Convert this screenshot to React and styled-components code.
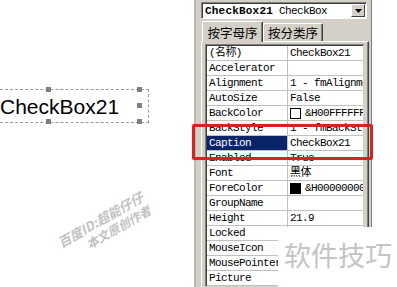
import styled, { createGlobalStyle } from 'styled-components';

const GlobalStyle = createGlobalStyle`
  html, body {
    margin: 0;
    padding: 0;
    background: #ffffff;
    overflow: hidden;
  }
`;

const rows = [
  { name: '(名称)', value: 'CheckBox21' },
  { name: 'Accelerator', value: '' },
  { name: 'Alignment', value: '1 - fmAlignmentRight' },
  { name: 'AutoSize', value: 'False' },
  { name: 'BackColor', value: '&H00FFFFFF&', swatch: '#ffffff' },
  { name: 'BackStyle', value: '1 - fmBackStyleOpaque' },
  { name: 'Caption', value: 'CheckBox21', selected: true },
  { name: 'Enabled', value: 'True' },
  { name: 'Font', value: '黑体' },
  { name: 'ForeColor', value: '&H00000000&', swatch: '#000000' },
  { name: 'GroupName', value: '' },
  { name: 'Height', value: '21.9' },
  { name: 'Locked', value: 'False' },
  { name: 'MouseIcon', value: '(None)' },
  { name: 'MousePointer', value: '0 - fmMousePointerDefault' },
  { name: 'Picture', value: '(None)' },
];

export default function App() {
  return (
    <StyledPage>
      <GlobalStyle />
      <StyledCanvas>
        <StyledControl>
          CheckBox21
          <StyledHandle $x="55px" $y="-3px" />
          <StyledHandle $x="55px" $y="29px" />
          <StyledHandle $x="146px" $y="-3px" />
          <StyledHandle $x="146px" $y="13px" />
          <StyledHandle $x="146px" $y="29px" />
        </StyledControl>
      </StyledCanvas>

      <StyledWindow>
        <StyledCombo>
          <StyledComboText>
            <b>CheckBox21</b> CheckBox
          </StyledComboText>
          <StyledComboButton>
            <svg width="7" height="4" viewBox="0 0 7 4">
              <path d="M0 0h7L3.5 4z" fill="#000" />
            </svg>
          </StyledComboButton>
        </StyledCombo>

        <StyledTabs>
          <StyledTab $active>按字母序</StyledTab>
          <StyledTab>按分类序</StyledTab>
        </StyledTabs>

        <StyledTabPanel>
          <StyledGrid>
            {rows.map((r) => (
              <StyledRow key={r.name}>
                <StyledName $selected={r.selected}>{r.name}</StyledName>
                <StyledValue>
                  {r.swatch && <StyledSwatch $color={r.swatch} />}
                  {r.value}
                </StyledValue>
              </StyledRow>
            ))}
          </StyledGrid>
        </StyledTabPanel>
      </StyledWindow>

      <StyledHighlight />

      <StyledStamp>
        <span>百度ID:超能仔仔</span>
        <span>本文原创作者</span>
      </StyledStamp>

      <StyledCover>软件技巧</StyledCover>
    </StyledPage>
  );
}

const StyledPage = styled.div`
  position: relative;
  width: 397px;
  height: 287px;
  display: flex;
  background: #ffffff;
  overflow: hidden;
`;

const StyledCanvas = styled.div`
  width: 194px;
  flex-shrink: 0;
  padding-top: 89px;
  box-sizing: border-box;
`;

const StyledControl = styled.div`
  position: relative;
  width: 159px;
  height: 34px;
  margin-left: -10px;
  padding-left: 9px;
  box-sizing: border-box;
  border: 1px dashed #9a9a9a;
  font-family: "Liberation Sans", Arial, sans-serif;
  font-size: 21px;
  line-height: 33px;
  color: #000000;
`;

const StyledHandle = styled.div`
  position: absolute;
  left: ${(p) => p.$x};
  top: ${(p) => p.$y};
  width: 5px;
  height: 5px;
  background: #7f7f7f;
`;

const StyledWindow = styled.div`
  width: 178px;
  flex-shrink: 0;
  height: 287px;
  box-sizing: border-box;
  background: #d4d0c8;
  border-left: 2px solid #bcb8b0;
  border-right: 1px solid #808080;
  padding: 2px 4px 0 5px;
  display: flex;
  flex-direction: column;
`;

const StyledCombo = styled.div`
  height: 17px;
  box-sizing: border-box;
  display: flex;
  align-items: center;
  background: #ffffff;
  border-top: 1px solid #808080;
  border-left: 1px solid #808080;
  border-bottom: 1px solid #ffffff;
  border-right: 1px solid #ffffff;
  box-shadow: inset 1px 1px 0 #404040;
  padding: 0 1px 0 3px;
`;

const StyledComboText = styled.div`
  flex: 1;
  font-family: "Liberation Mono", "Courier New", monospace;
  font-size: 11px;
  letter-spacing: -0.6px;
  white-space: nowrap;
  overflow: hidden;
  b {
    letter-spacing: 0.2px;
  }
`;

const StyledComboButton = styled.div`
  width: 14px;
  height: 13px;
  box-sizing: border-box;
  display: flex;
  align-items: center;
  justify-content: center;
  background: #d4d0c8;
  border-top: 1px solid #ffffff;
  border-left: 1px solid #ffffff;
  border-right: 1px solid #404040;
  border-bottom: 1px solid #404040;
`;

const StyledTabs = styled.div`
  display: flex;
  align-items: flex-end;
  height: 20px;
  margin-top: 2px;
  padding-left: 1px;
  position: relative;
  z-index: 1;
`;

const StyledTab = styled.div`
  width: ${(p) => (p.$active ? '61px' : '60px')};
  height: ${(p) => (p.$active ? '21px' : '18px')};
  margin-bottom: ${(p) => (p.$active ? '-1px' : '0')};
  box-sizing: border-box;
  display: flex;
  align-items: center;
  justify-content: center;
  background: #d4d0c8;
  border-top: 1px solid #ffffff;
  border-left: 1px solid #ffffff;
  border-right: 1px solid #404040;
  box-shadow: inset -1px 0 0 #808080;
  border-radius: 2px 2px 0 0;
  font-family: "Noto Sans CJK SC", sans-serif;
  font-size: 12.5px;
  color: #000000;
`;

const StyledTabPanel = styled.div`
  width: 168px;
  flex: 1;
  box-sizing: border-box;
  border-top: 1px solid #ffffff;
  border-left: 1px solid #ffffff;
  border-right: 1px solid #404040;
  box-shadow: inset -1px 0 0 #808080;
  padding: 2px 3px 0 3px;
`;

const StyledGrid = styled.div`
  background: #ffffff;
  border-top: 1px solid #808080;
  border-left: 1px solid #808080;
  box-shadow: inset 1px 1px 0 #404040;
  padding: 1px 0 0 1px;
  width: 160px;
  box-sizing: border-box;
  border-right: 2px solid #d4d0c8;
`;

const StyledRow = styled.div`
  display: grid;
  grid-template-columns: 81px 1fr;
  height: 15px;
  box-sizing: border-box;
  border-bottom: 1px solid #c0c0c0;
  font-family: "Liberation Mono", "Noto Sans CJK SC", monospace;
  font-size: 11px;
  letter-spacing: -0.6px;
  line-height: 14px;
  color: #000000;
`;

const StyledName = styled.div`
  padding-left: 2px;
  border-right: 1px solid #c0c0c0;
  white-space: nowrap;
  overflow: hidden;
  background: ${(p) => (p.$selected ? '#0a246a' : 'transparent')};
  color: ${(p) => (p.$selected ? '#ffffff' : '#000000')};
`;

const StyledValue = styled.div`
  display: flex;
  align-items: center;
  gap: 4px;
  padding-left: 2px;
  white-space: nowrap;
  overflow: hidden;
`;

const StyledSwatch = styled.span`
  flex-shrink: 0;
  width: 9px;
  height: 9px;
  border: 1px solid #000000;
  background: ${(p) => p.$color};
`;

const StyledHighlight = styled.div`
  position: absolute;
  left: 192px;
  top: 124px;
  width: 181px;
  height: 36px;
  box-sizing: border-box;
  border: 3px solid #d42420;
  border-radius: 2px;
  box-shadow: 0 0 1px rgba(212, 36, 32, 0.6);
`;

const StyledStamp = styled.div`
  position: absolute;
  left: 42px;
  top: 211px;
  width: 124px;
  display: flex;
  flex-direction: column;
  align-items: center;
  transform: rotate(-30deg);
  font-family: "Noto Sans CJK SC", sans-serif;
  font-weight: 700;
  font-style: italic;
  font-size: 13px;
  line-height: 15px;
  color: #c2c2c2;
  span:last-child {
    margin-left: 24px;
    font-size: 12px;
  }
`;

const StyledCover = styled.div`
  position: absolute;
  left: 278px;
  top: 227px;
  right: 0;
  bottom: 0;
  background: #ffffff;
  padding: 10px 0 0 6px;
  font-family: "Noto Sans CJK SC", sans-serif;
  font-size: 27px;
  line-height: 36px;
  color: #c4c4c4;
`;
